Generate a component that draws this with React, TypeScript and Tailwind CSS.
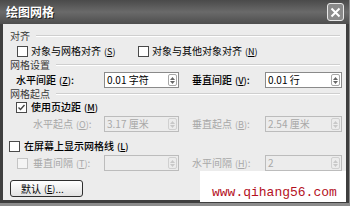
import React from "react";

const font = { fontFamily: '"Noto Sans CJK SC", "Noto Sans", sans-serif' };

const Check = ({ checked = false, disabled = false }: { checked?: boolean; disabled?: boolean }) => (
  <span
    className={`flex h-[11px] w-[11px] shrink-0 items-center justify-center border ${
      disabled ? "border-[#c4c4c4] bg-[#f4f4f4]" : "border-[#4a4a4a] bg-white"
    }`}
  >
    {checked && (
      <svg width="9" height="9" viewBox="0 0 9 9">
        <path d="M1.5 4.5 L3.5 6.5 L7.5 2" fill="none" stroke="#444" strokeWidth="1.4" />
      </svg>
    )}
  </span>
);

const Key = ({ k }: { k: string }) => (
  <span className="ml-[3px] text-[9px]">
    (<span className="underline">{k}</span>)
  </span>
);

const Spin = ({ disabled = false }: { disabled?: boolean }) => (
  <span
    className={`ml-auto mr-[1px] flex h-[12px] w-[9px] flex-col items-center justify-center gap-[1px] rounded-[2px] border ${
      disabled ? "border-[#d0d0d0]" : "border-[#a8a8a8]"
    }`}
  >
    <svg width="5" height="3" viewBox="0 0 5 3">
      <path d="M0 3 L2.5 0 L5 3 Z" fill={disabled ? "#c8c8c8" : "#666"} />
    </svg>
    <svg width="5" height="3" viewBox="0 0 5 3">
      <path d="M0 0 L2.5 3 L5 0 Z" fill={disabled ? "#c8c8c8" : "#666"} />
    </svg>
  </span>
);

const Field = ({ value, width, disabled = false }: { value: string; width: string; disabled?: boolean }) => (
  <div
    className={`flex h-[16px] items-center border pl-[2px] text-[10px] ${width} ${
      disabled ? "border-[#bcbcbc] bg-[#ececec] text-[#a8a8a8]" : "border-[#8a8a8a] bg-white text-black"
    }`}
  >
    <span className="leading-none">{value}</span>
    <Spin disabled={disabled} />
  </div>
);

const Group = ({ title }: { title: string }) => (
  <div className="flex h-full items-center pl-[7px] pr-[6px]">
    <span className="text-[10px] leading-none text-[#3a3a3a]">{title}</span>
    <span className="ml-[6px] h-[2px] flex-1 border-t border-b border-t-[#cfcfcf] border-b-white" />
  </div>
);

export default function App() {
  return (
    <div className="relative h-[206px] w-[350px] overflow-hidden bg-[#8c8c8c]" style={font}>
      <div className="flex h-[203px] w-[349px] flex-col border-x-[3px] border-b-[3px] border-[#3e3e3e] bg-[#ececec]">
        {/* title bar */}
        <div className="-mx-[3px] flex h-[24px] shrink-0 items-center bg-gradient-to-b from-[#4a4a4a] via-[#6a6a6a] to-[#4e4e4e] pl-[6px] pr-[5px]">
          <span className="text-[12px] font-bold leading-none text-white [text-shadow:1px_1px_0_#222]">绘图网格</span>
          <span className="ml-auto flex h-[18px] w-[17px] items-center justify-center rounded-[3px] border border-[#e8e8e8] bg-[#8a8a8a]">
            <svg width="11" height="11" viewBox="0 0 11 11">
              <path d="M1.5 1.5 L9.5 9.5 M9.5 1.5 L1.5 9.5" stroke="white" strokeWidth="2" />
            </svg>
          </span>
        </div>

        <div className="h-[20px] pt-[3px]">
          <Group title="对齐" />
        </div>

        <div className="flex h-[14px] items-center pl-[14px] text-[10px] leading-none text-black">
          <Check />
          <span className="ml-[3px] flex w-[107px] items-center">
            对象与网格对齐<Key k="S" />
          </span>
          <Check />
          <span className="ml-[3px] flex items-center">
            对象与其他对象对齐<Key k="N" />
          </span>
        </div>

        <div className="h-[14px]">
          <Group title="网格设置" />
        </div>

        <div className="flex h-[16px] items-center pl-[13px] text-[10px] leading-none text-black">
          <span className="flex w-[88px] items-center font-medium">
            水平间距<Key k="Z" />:
          </span>
          <Field value="0.01 字符" width="w-[75px]" />
          <span className="ml-[13px] flex w-[73px] items-center font-medium">
            垂直间距<Key k="V" />:
          </span>
          <Field value="0.01 行" width="w-[77px]" />
        </div>

        <div className="h-[12px]">
          <Group title="网格起点" />
        </div>

        <div className="flex h-[14px] items-center pl-[13px] text-[10px] leading-none text-black">
          <Check checked />
          <span className="ml-[4px] flex items-center font-medium">
            使用页边距<Key k="M" />
          </span>
        </div>

        <div className="mt-[2px] flex h-[16px] items-center pl-[30px] text-[10px] leading-none text-[#a8a8a8]">
          <span className="flex w-[71px] items-center">
            水平起点<Key k="O" />:
          </span>
          <Field value="3.17 厘米" width="w-[75px]" disabled />
          <span className="ml-[13px] flex w-[73px] items-center">
            垂直起点<Key k="B" />:
          </span>
          <Field value="2.54 厘米" width="w-[77px]" disabled />
        </div>

        <div className="mt-[6px] flex h-[16px] items-center pl-[6px] text-[10px] leading-none text-black">
          <Check />
          <span className="ml-[4px] flex items-center font-medium">
            在屏幕上显示网格线<Key k="L" />
          </span>
        </div>

        <div className="mt-[1px] flex h-[16px] items-center pl-[14px] text-[10px] leading-none text-[#a8a8a8]">
          <Check disabled />
          <span className="ml-[5px] flex w-[71px] items-center">
            垂直间隔<Key k="T" />:
          </span>
          <Field value="" width="w-[75px]" disabled />
          <span className="ml-[13px] flex w-[73px] items-center">
            水平间隔<Key k="H" />:
          </span>
          <Field value="2" width="w-[77px]" disabled />
        </div>

        <div className="mt-[9px] pl-[7px]">
          <button className="flex h-[17px] w-[73px] items-center rounded-[3px] border border-[#2e2e2e] bg-gradient-to-b from-white to-[#e2e2e2] pl-[10px] text-[10px] leading-none text-black">
            默认<Key k="E" />...
          </button>
        </div>
      </div>

      {/* watermark */}
      <div className="absolute left-[200px] top-[171px] flex h-[31px] w-[146px] items-end bg-white pb-[3px] pl-[12px]">
        <span
          className="text-[13px] leading-none text-[#b4101e]"
          style={{ fontFamily: '"Liberation Mono", monospace' }}
        >
          www.qihang56.com
        </span>
      </div>
    </div>
  );
}
